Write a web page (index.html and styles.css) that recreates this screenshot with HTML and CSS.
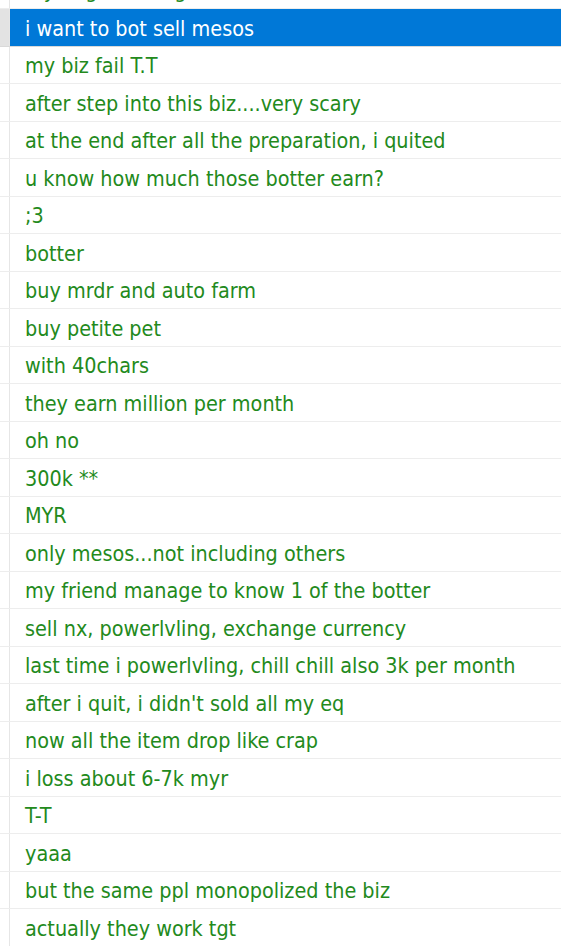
FILE: index.html
```html
<!DOCTYPE html>
<html>
<head>
<meta charset="utf-8">
<link rel="stylesheet" href="styles.css">
</head>
<body>
<ul class="list">
  <li class="row"><span class="gutter"></span><span class="cell">my english not good</span></li>
  <li class="row selected"><span class="gutter"></span><span class="cell">i want to bot sell mesos</span></li>
  <li class="row"><span class="gutter"></span><span class="cell">my biz fail T.T</span></li>
  <li class="row"><span class="gutter"></span><span class="cell">after step into this biz....very scary</span></li>
  <li class="row"><span class="gutter"></span><span class="cell">at the end after all the preparation, i quited</span></li>
  <li class="row"><span class="gutter"></span><span class="cell">u know how much those botter earn?</span></li>
  <li class="row"><span class="gutter"></span><span class="cell">;3</span></li>
  <li class="row"><span class="gutter"></span><span class="cell">botter</span></li>
  <li class="row"><span class="gutter"></span><span class="cell">buy mrdr and auto farm</span></li>
  <li class="row"><span class="gutter"></span><span class="cell">buy petite pet</span></li>
  <li class="row"><span class="gutter"></span><span class="cell">with 40chars</span></li>
  <li class="row"><span class="gutter"></span><span class="cell">they earn million per month</span></li>
  <li class="row"><span class="gutter"></span><span class="cell">oh no</span></li>
  <li class="row"><span class="gutter"></span><span class="cell">300k **</span></li>
  <li class="row"><span class="gutter"></span><span class="cell">MYR</span></li>
  <li class="row"><span class="gutter"></span><span class="cell">only mesos...not including others</span></li>
  <li class="row"><span class="gutter"></span><span class="cell">my friend manage to know 1 of the botter</span></li>
  <li class="row"><span class="gutter"></span><span class="cell">sell nx, powerlvling, exchange currency</span></li>
  <li class="row"><span class="gutter"></span><span class="cell">last time i powerlvling, chill chill also 3k per month</span></li>
  <li class="row"><span class="gutter"></span><span class="cell">after i quit, i didn't sold all my eq</span></li>
  <li class="row"><span class="gutter"></span><span class="cell">now all the item drop like crap</span></li>
  <li class="row"><span class="gutter"></span><span class="cell">i loss about 6-7k myr</span></li>
  <li class="row"><span class="gutter"></span><span class="cell">T-T</span></li>
  <li class="row"><span class="gutter"></span><span class="cell">yaaa</span></li>
  <li class="row"><span class="gutter"></span><span class="cell">but the same ppl monopolized the biz</span></li>
  <li class="row"><span class="gutter"></span><span class="cell">actually they work tgt</span></li>
  <li class="row"><span class="gutter"></span><span class="cell">&nbsp;</span></li>
</ul>
</body>
</html>
```
FILE: styles.css
```css
html, body {
  margin: 0;
  padding: 0;
  background: #ffffff;
  overflow: hidden;
}
.list {
  list-style: none;
  margin: -28.5px 0 0 0;
  padding: 0;
  font-family: "DejaVu Sans Condensed", "DejaVu Sans", sans-serif;
  font-size: 21.4px;
  color: #238a1c;
}
.row {
  display: flex;
  height: 37.5px;
  box-sizing: border-box;
  border-bottom: 1px solid #ededed;
}
.gutter {
  width: 9px;
  flex: none;
  border-right: 1px solid #e6e6e6;
}
.cell {
  flex: 1;
  display: flex;
  align-items: center;
  padding: 2px 0 0 15px;
  white-space: nowrap;
}
.selected {
  border-bottom-color: #d9d9d9;
}
.selected .gutter {
  background: #e3e3e3;
}
.selected .cell {
  background: #0078d7;
  color: #ffffff;
}
```
